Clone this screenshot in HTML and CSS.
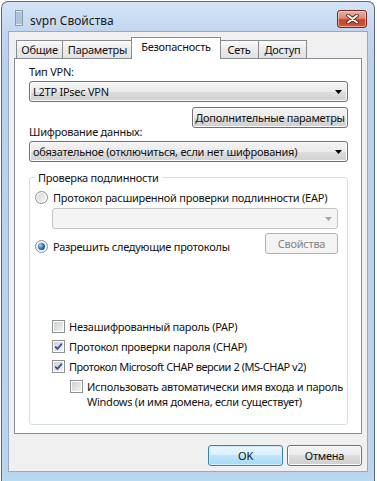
FILE: index.html
```html
<!DOCTYPE html>
<html lang="ru">
<head>
    <meta charset="UTF-8">
    <meta name="viewport" content="width=device-width, initial-scale=1.0">
    <title>svpn Свойства</title>
    <link rel="stylesheet" href="styles.css">
</head>
<body>
    <div class="window">
        <div class="titlebar">
            <svg class="app-icon" width="8" height="16" viewBox="0 0 8 16">
                <rect x="0.5" y="0.5" width="7" height="15" fill="#dfe8f2" stroke="#8a9bb0"/>
                <path d="M1 3h6M1 5h6M1 7h6M1 9h6M1 11h6M1 13h6" stroke="#7f9fc6" stroke-width="1"/>
            </svg>
            <span class="title">svpn Свойства</span>
            <div class="close-btn">
                <svg width="13" height="10" viewBox="0 0 13 10">
                    <path d="M2 1.5L11 8.5M11 1.5L2 8.5" stroke="#5a1d12" stroke-width="3.6" stroke-linecap="round"/>
                    <path d="M2 1.5L11 8.5M11 1.5L2 8.5" stroke="#fff" stroke-width="2" stroke-linecap="round"/>
                </svg>
            </div>
        </div>
        <div class="client">
            <div class="tabs">
                <div class="tab tab-general">Общие</div>
                <div class="tab tab-options">Параметры</div>
                <div class="tab tab-security active">Безопасность</div>
                <div class="tab tab-network">Сеть</div>
                <div class="tab tab-access">Доступ</div>
            </div>
            <div class="panel">
                <div class="label">Тип VPN:</div>
                <div class="combo">
                    <span>L2TP IPsec VPN</span>
                    <svg class="arrow" width="7" height="4" viewBox="0 0 7 4"><path d="M0 0h7L3.5 4z" fill="#000"/></svg>
                </div>
                <div class="row-right">
                    <div class="btn btn-advanced">Дополнительные параметры</div>
                </div>
                <div class="label label-tight">Шифрование данных:</div>
                <div class="combo">
                    <span>обязательное (отключиться, если нет шифрования)</span>
                    <svg class="arrow" width="7" height="4" viewBox="0 0 7 4"><path d="M0 0h7L3.5 4z" fill="#000"/></svg>
                </div>
                <fieldset class="group">
                    <legend>Проверка подлинности</legend>
                    <div class="option">
                        <span class="radio"></span>
                        <span>Протокол расширенной проверки подлинности (EAP)</span>
                    </div>
                    <div class="combo disabled">
                        <span></span>
                        <svg class="arrow" width="7" height="4" viewBox="0 0 7 4"><path d="M0 0h7L3.5 4z" fill="#a7a7a7"/></svg>
                    </div>
                    <div class="option-row">
                        <div class="option">
                            <span class="radio checked"></span>
                            <span>Разрешить следующие протоколы</span>
                        </div>
                        <div class="btn disabled btn-props">Свойства</div>
                    </div>
                    <div class="checks">
                        <div class="check-row">
                            <span class="checkbox"></span>
                            <span>Незашифрованный пароль (PAP)</span>
                        </div>
                        <div class="check-row">
                            <span class="checkbox checked">
                                <svg width="9" height="9" viewBox="0 0 9 9"><path d="M1.2 4.6L3.4 6.9L7.9 1.6" fill="none" stroke="#37508f" stroke-width="1.7"/></svg>
                            </span>
                            <span>Протокол проверки пароля (CHAP)</span>
                        </div>
                        <div class="check-row">
                            <span class="checkbox checked">
                                <svg width="9" height="9" viewBox="0 0 9 9"><path d="M1.2 4.6L3.4 6.9L7.9 1.6" fill="none" stroke="#37508f" stroke-width="1.7"/></svg>
                            </span>
                            <span class="narrow">Протокол Microsoft CHAP версии 2 (MS-CHAP v2)</span>
                        </div>
                        <div class="check-row nested">
                            <span class="checkbox"></span>
                            <span>Использовать автоматически имя входа и пароль<br>Windows (и имя домена, если существует)</span>
                        </div>
                    </div>
                </fieldset>
            </div>
            <div class="footer">
                <div class="btn btn-default">OK</div>
                <div class="btn">Отмена</div>
            </div>
        </div>
    </div>
</body>
</html>
```

FILE: styles.css
```css
* {
    box-sizing: border-box;
}
body {
    margin: 0;
    background: #fff;
    font-family: "Noto Sans", "Open Sans", sans-serif;
    font-size: 11px;
    letter-spacing: -0.25px;
    color: #111;
    white-space: nowrap;
}
.window {
    display: flex;
    flex-direction: column;
    width: 374px;
    height: 480px;
    margin: 1px 0 0 1px;
    padding: 0 6px 9px;
    border: 1px solid #5c6a7d;
    border-bottom: none;
    border-radius: 7px 7px 0 0;
    background: linear-gradient(#d4e4f6, #c2d7ef 28px, #bad1eb 60px, #bcd3ec 470px, #b4dcf2);
}
.titlebar {
    display: flex;
    align-items: flex-start;
    height: 29px;
    padding: 8px 1px 0 7px;
}
.app-icon {
    display: block;
}
.title {
    margin: 3px 0 0 7px;
    font-size: 12px;
    letter-spacing: 0;
    line-height: 15px;
    color: #1b1b1b;
}
.close-btn {
    display: flex;
    align-items: center;
    justify-content: center;
    width: 30px;
    height: 18px;
    margin-left: auto;
    border: 1px solid #7a2a1c;
    border-radius: 3px;
    background: linear-gradient(#eab3a5, #d98a77 45%, #c8432c 55%, #d0563c);
    box-shadow: inset 0 0 0 1px rgba(255, 220, 210, 0.6);
}
.close-btn svg {
    display: block;
}
.client {
    flex: 1;
    border: 1px solid #95abc5;
    background: #f0f0f0;
}
.tabs {
    display: flex;
    align-items: flex-end;
    height: 21px;
    margin-top: 5px;
    padding-left: 7px;
}
.tab {
    height: 18px;
    border: 1px solid #898c95;
    border-bottom: none;
    background: linear-gradient(#fafafa, #ebebeb 50%, #e2e2e2);
    text-align: center;
    line-height: 17px;
}
.tab-general { width: 47px; }
.tab-options { width: 70px; border-left: none; }
.tab-network { width: 40px; }
.tab-access { width: 48px; border-left: none; }
.tab.active {
    position: relative;
    z-index: 1;
    width: 90px;
    height: 22px;
    margin: 0 -2px -1px;
    background: #fff;
    line-height: 18px;
}
.panel {
    margin: 0 5px;
    padding: 5px 13px 8px 14px;
    border: 1px solid #898c95;
    background: #fff;
}
.label {
    line-height: 15px;
    margin-bottom: 2px;
}
.label-tight {
    margin-top: -4px;
}
.combo {
    display: flex;
    align-items: center;
    justify-content: space-between;
    height: 21px;
    padding: 0 5px 0 3px;
    border: 1px solid #707070;
    border-radius: 3px;
    background: linear-gradient(#f3f3f3, #ebebeb 50%, #dddddd 50%, #d2d2d2);
    box-shadow: inset 0 0 0 1px #fbfbfb;
    line-height: 15px;
}
.arrow {
    display: block;
    flex-shrink: 0;
}
.combo.disabled {
    margin: 3px 0 0 17px;
    border-color: #c3c6c8;
    background: #f4f4f4;
    box-shadow: none;
}
.row-right {
    display: flex;
    justify-content: flex-end;
    margin-top: 5px;
}
.btn {
    display: flex;
    align-items: center;
    justify-content: center;
    height: 21px;
    border: 1px solid #707070;
    border-radius: 3px;
    background: linear-gradient(#f3f3f3, #ebebeb 50%, #dddddd 50%, #cfcfcf);
    box-shadow: inset 0 0 0 1px #fcfcfc;
    line-height: 15px;
}
.btn-advanced {
    width: 156px;
}
.btn.disabled {
    border-color: #adb2b5;
    background: #f4f4f4;
    box-shadow: none;
    color: #838383;
}
.btn-props {
    width: 73px;
}
.group {
    min-width: 0;
    margin: 8px 0 0;
    padding: 5px 9px 15px 5px;
    border: 1px solid #d5dfe5;
    border-radius: 3px;
}
.group legend {
    padding: 0 3px;
    line-height: 15px;
}
.option {
    display: flex;
    align-items: center;
    line-height: 15px;
}
.radio {
    position: relative;
    width: 13px;
    height: 13px;
    margin-right: 5px;
    border: 1px solid #8c8e8f;
    border-radius: 50%;
    background: linear-gradient(135deg, #d6d6d6, #f7f7f7);
    box-shadow: inset 0 0 0 1px #fff;
}
.radio.checked::after {
    content: "";
    position: absolute;
    top: 2px;
    left: 2px;
    width: 7px;
    height: 7px;
    border-radius: 50%;
    background: radial-gradient(circle at 35% 35%, #9ed8f7, #1f6aa8 55%, #0d3c6e);
}
.option-row {
    display: flex;
    align-items: flex-end;
    justify-content: space-between;
    margin-top: 4px;
}
.checks {
    margin: 65px 0 0 17px;
}
.check-row {
    display: flex;
    align-items: flex-start;
    line-height: 15px;
    margin-bottom: 5px;
}
.check-row:last-child {
    margin-bottom: 0;
}
.check-row.nested {
    margin-left: 18px;
}
.narrow {
    letter-spacing: -0.45px;
}
.checkbox {
    display: flex;
    align-items: center;
    justify-content: center;
    flex-shrink: 0;
    width: 13px;
    height: 13px;
    margin: 1px 4px 0 0;
    border: 1px solid #8e8f8f;
    background: linear-gradient(135deg, #c9ccd1, #f6f6f6);
    box-shadow: inset 0 0 0 1px #fff;
}
.checkbox svg {
    display: block;
}
.footer {
    display: flex;
    justify-content: flex-end;
    gap: 4px;
    margin-top: 11px;
    padding-right: 5px;
}
.footer .btn {
    width: 75px;
}
.btn-default {
    border-color: #3c7fb1;
    background: linear-gradient(#eaf6fd, #d9f0fc 50%, #bee6fd 50%, #a7d9f5);
    box-shadow: inset 0 0 0 1px #d0ecfb;
}
```
